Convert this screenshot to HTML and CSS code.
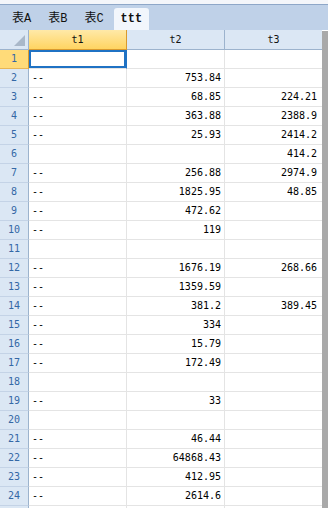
FILE: index.html
```html
<!DOCTYPE html>
<html lang="zh">

<head>
    <meta charset="UTF-8">
    <meta name="viewport" content="width=device-width, initial-scale=1.0">
    <title>表格</title>
    <link rel="stylesheet" href="styles.css">
</head>

<body>
    <div class="sheet">
        <div class="tabs">
            <span class="tab">表A</span>
            <span class="tab">表B</span>
            <span class="tab">表C</span>
            <span class="tab active">ttt</span>
        </div>

        <div class="body">
            <div class="cells">
                <div class="row head">
                    <div class="rh corner"><span class="tri"></span></div>
                    <div class="c ch cur">t1</div>
                    <div class="c ch">t2</div>
                    <div class="c ch last">t3</div>
                </div>
                <div class="row"><div class="rh cur">1</div><div class="c sel"></div><div class="c n"></div><div class="c n last"></div></div>
                <div class="row"><div class="rh">2</div><div class="c">--</div><div class="c n">753.84</div><div class="c n last"></div></div>
                <div class="row"><div class="rh">3</div><div class="c">--</div><div class="c n">68.85</div><div class="c n last">224.21</div></div>
                <div class="row"><div class="rh">4</div><div class="c">--</div><div class="c n">363.88</div><div class="c n last">2388.9</div></div>
                <div class="row"><div class="rh">5</div><div class="c">--</div><div class="c n">25.93</div><div class="c n last">2414.2</div></div>
                <div class="row"><div class="rh">6</div><div class="c"></div><div class="c n"></div><div class="c n last">414.2</div></div>
                <div class="row"><div class="rh">7</div><div class="c">--</div><div class="c n">256.88</div><div class="c n last">2974.9</div></div>
                <div class="row"><div class="rh">8</div><div class="c">--</div><div class="c n">1825.95</div><div class="c n last">48.85</div></div>
                <div class="row"><div class="rh">9</div><div class="c">--</div><div class="c n">472.62</div><div class="c n last"></div></div>
                <div class="row"><div class="rh">10</div><div class="c">--</div><div class="c n">119</div><div class="c n last"></div></div>
                <div class="row"><div class="rh">11</div><div class="c"></div><div class="c n"></div><div class="c n last"></div></div>
                <div class="row"><div class="rh">12</div><div class="c">--</div><div class="c n">1676.19</div><div class="c n last">268.66</div></div>
                <div class="row"><div class="rh">13</div><div class="c">--</div><div class="c n">1359.59</div><div class="c n last"></div></div>
                <div class="row"><div class="rh">14</div><div class="c">--</div><div class="c n">381.2</div><div class="c n last">389.45</div></div>
                <div class="row"><div class="rh">15</div><div class="c">--</div><div class="c n">334</div><div class="c n last"></div></div>
                <div class="row"><div class="rh">16</div><div class="c">--</div><div class="c n">15.79</div><div class="c n last"></div></div>
                <div class="row"><div class="rh">17</div><div class="c">--</div><div class="c n">172.49</div><div class="c n last"></div></div>
                <div class="row"><div class="rh">18</div><div class="c"></div><div class="c n"></div><div class="c n last"></div></div>
                <div class="row"><div class="rh">19</div><div class="c">--</div><div class="c n">33</div><div class="c n last"></div></div>
                <div class="row"><div class="rh">20</div><div class="c"></div><div class="c n"></div><div class="c n last"></div></div>
                <div class="row"><div class="rh">21</div><div class="c">--</div><div class="c n">46.44</div><div class="c n last"></div></div>
                <div class="row"><div class="rh">22</div><div class="c">--</div><div class="c n">64868.43</div><div class="c n last"></div></div>
                <div class="row"><div class="rh">23</div><div class="c">--</div><div class="c n">412.95</div><div class="c n last"></div></div>
                <div class="row"><div class="rh">24</div><div class="c">--</div><div class="c n">2614.6</div><div class="c n last"></div></div>
                <div class="row"><div class="rh"></div><div class="c"></div><div class="c n"></div><div class="c n last"></div></div>
            </div>
            <div class="vscroll"></div>
        </div>
    </div>
</body>

</html>
```

FILE: styles.css
```css
body {
    margin: 0;
    padding: 0;
    background-color: #fff;
    font-family: "DejaVu Sans Mono", "Noto Sans CJK SC", monospace;
    font-size: 10px;
    overflow: hidden;
}

.sheet {
    width: 328px;
    height: 508px;
    padding-top: 4px;
    box-sizing: border-box;
    background-color: #f4f6fa;
    overflow: hidden;
}

.tabs {
    height: 26px;
    box-sizing: border-box;
    border-top: 1px solid #8ea7c8;
    background-color: #bfd1e8;
    display: flex;
    align-items: flex-end;
    padding-left: 6px;
}

.tab {
    height: 22px;
    line-height: 22px;
    padding: 0 6px;
    margin-right: 5px;
    font-family: "Liberation Mono", "Noto Sans CJK SC", monospace;
    font-size: 12px;
    color: #111;
}

.tab.active {
    background-color: #f2f6fc;
    border-radius: 3px 3px 0 0;
    font-weight: bold;
    padding: 0 7px;
    margin-left: -1px;
}

.body {
    display: flex;
    background-color: #fff;
}

.cells {
    width: 322px;
}

.vscroll {
    width: 6px;
    margin-top: 1px;
    background-color: #a9a9a9;
}

.row {
    display: flex;
    height: 19px;
}

.row.head {
    height: 20px;
}

.rh {
    width: 29px;
    flex: none;
    box-sizing: border-box;
    border-right: 1px solid #9cb3cd;
    border-bottom: 1px solid #c4d3e6;
    background-color: #dbe7f4;
    color: #3468a6;
    text-align: center;
    line-height: 18px;
}

.rh.cur {
    background-color: #ffdb79;
    border-right-color: #d99a2e;
    border-bottom-color: #e8b655;
}

.corner {
    position: relative;
    border-bottom: 1px solid #9cb3cd;
}

.tri {
    position: absolute;
    right: 3px;
    bottom: 3px;
    width: 0;
    height: 0;
    border-left: 11px solid transparent;
    border-bottom: 11px solid #a9b8c9;
}

.c {
    width: 98px;
    flex: none;
    box-sizing: border-box;
    border-right: 1px solid #e4e4e4;
    border-bottom: 1px solid #e4e4e4;
    padding: 0 3px;
    line-height: 18px;
    color: #000;
    white-space: nowrap;
    overflow: hidden;
}

.c.last {
    width: 97px;
    border-right: none;
}

.c.n {
    text-align: right;
    padding-right: 3px;
}

.c.last.n {
    padding-right: 5px;
}

.ch {
    text-align: center;
    background-color: #dbe7f4;
    border-right: 1px solid #9cb3cd;
    border-bottom: 1px solid #9cb3cd;
    line-height: 19px;
    color: #111;
}

.ch.last {
    border-right: none;
}

.ch.cur {
    background: linear-gradient(#ffe9a8, #ffd461);
    border-right-color: #d99a2e;
    border-bottom-color: #d99a2e;
}

.c.sel {
    box-shadow: inset 0 0 0 2px #1f72c4;
    border-right-color: #1f72c4;
}
```
